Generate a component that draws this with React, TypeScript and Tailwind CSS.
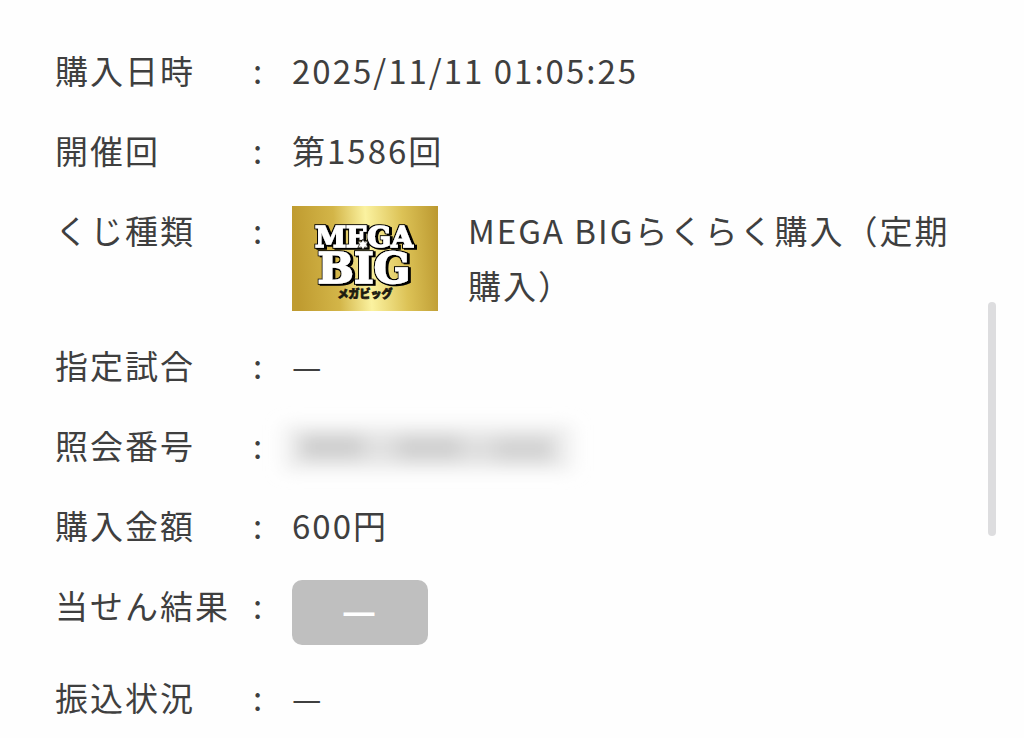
import type { ReactNode } from "react";

function MegaBigLogo() {
  return (
    <svg
      viewBox="0 0 146 105"
      role="img"
      aria-label="MEGA BIG"
      className="mt-[3px] block w-[146px] shrink-0 tracking-normal"
    >
      <defs>
        <linearGradient id="gold" x1="0" y1="0.05" x2="1" y2="0">
          <stop offset="0" stopColor="#bf9b30" />
          <stop offset="0.28" stopColor="#d3b548" />
          <stop offset="0.5" stopColor="#fbf2a0" />
          <stop offset="0.75" stopColor="#dcc256" />
          <stop offset="1" stopColor="#bb9830" />
        </linearGradient>
        {/* dark outline with a short drop to the lower right */}
        <filter id="logo-outline" x="-10%" y="-10%" width="120%" height="120%">
          <feMorphology in="SourceAlpha" operator="dilate" radius="1.2" result="fat" />
          <feOffset in="fat" dx="2" dy="1" result="drop" />
          <feMerge result="both">
            <feMergeNode in="fat" />
            <feMergeNode in="drop" />
          </feMerge>
          <feMerge>
            <feMergeNode in="both" />
            <feMergeNode in="SourceGraphic" />
          </feMerge>
        </filter>
      </defs>
      <rect width="146" height="105" fill="url(#gold)" />
      <g
        fontFamily="'DejaVu Serif', serif"
        fontWeight="700"
        textAnchor="middle"
        fill="#fff"
        stroke="#fff"
        strokeWidth="1.4"
      >
        <text x="72" y="41" fontSize="28" filter="url(#logo-outline)">
          MEGA
        </text>
        <text x="72" y="77" fontSize="43" filter="url(#logo-outline)">
          BIG
        </text>
      </g>
      <path
        d="M71 33l1.600 3 3.600-.5-1.800 3 1.800 3-3.600-.4-1.600 3-1.600-3-3.600.4 1.800-3-1.800-3 3.600.5z"
        fill="#fff"
        stroke="#1d1a10"
        strokeWidth="0.8"
      />
      <text
        x="73"
        y="92"
        fontSize="11"
        fontWeight="900"
        textAnchor="middle"
        fontFamily="'Noto Sans CJK JP', sans-serif"
        fill="#1d1a10"
        stroke="#1d1a10"
        strokeWidth="0.8"
      >
        メガビッグ
      </text>
    </svg>
  );
}

function MaskedNumber() {
  return (
    <svg viewBox="0 0 340 55" aria-hidden="true" className="-ml-4 block w-[340px] overflow-visible">
      <defs>
        <filter id="soft" x="-20%" y="-60%" width="140%" height="220%">
          <feGaussianBlur stdDeviation="9 8" />
        </filter>
      </defs>
      <g filter="url(#soft)">
        <rect x="8" y="7" width="288" height="46" fill="#eeeeee" />
        <rect x="24" y="16" width="62" height="26" fill="#cfcfcf" />
        <rect x="86" y="18" width="36" height="24" fill="#e0e0e0" />
        <rect x="122" y="17" width="62" height="26" fill="#d0d0d0" />
        <rect x="184" y="19" width="36" height="24" fill="#dedede" />
        <rect x="220" y="18" width="58" height="26" fill="#d3d3d3" />
      </g>
    </svg>
  );
}

function Row({ label, children }: { label: string; children: ReactNode }) {
  return (
    <div className="flex items-start">
      <dt className="flex w-[237px] shrink-0 whitespace-nowrap">
        <span className="w-[198px]">{label}</span>
        <span>:</span>
      </dt>
      <dd className="min-w-0 flex-1">{children}</dd>
    </div>
  );
}

export default function App() {
  return (
    <main
      lang="ja"
      className="relative min-h-screen bg-[#fefefe] pt-[43px] pr-[60px] pl-[55px] font-['Noto_Sans_CJK_JP',sans-serif] text-[33px] leading-[55px] tracking-[2px] text-[#3f3f3f]"
    >
      <dl className="flex flex-col gap-[25px]">
        <Row label="購入日時">2025/11/11 01:05:25</Row>
        <Row label="開催回">第1586回</Row>
        <Row label="くじ種類">
          <div className="flex items-start gap-[30px]">
            <MegaBigLogo />
            <span className="min-w-0 flex-1">MEGA BIGらくらく購入（定期購入）</span>
          </div>
        </Row>
        <Row label="指定試合">—</Row>
        <Row label="照会番号">
          <MaskedNumber />
        </Row>
        <Row label="購入金額">600円</Row>
        <Row label="当せん結果">
          <div className="mt-0.5 w-[136px] rounded-[10px] bg-[#bfbfbf] pt-1 pb-3 text-center text-[38px] leading-[49px] font-bold text-white">
            —
          </div>
        </Row>
        <Row label="振込状況">—</Row>
      </dl>
      <div className="absolute top-[302px] right-7 h-[234px] w-2 rounded-full bg-[#dddddf]" />
    </main>
  );
}
